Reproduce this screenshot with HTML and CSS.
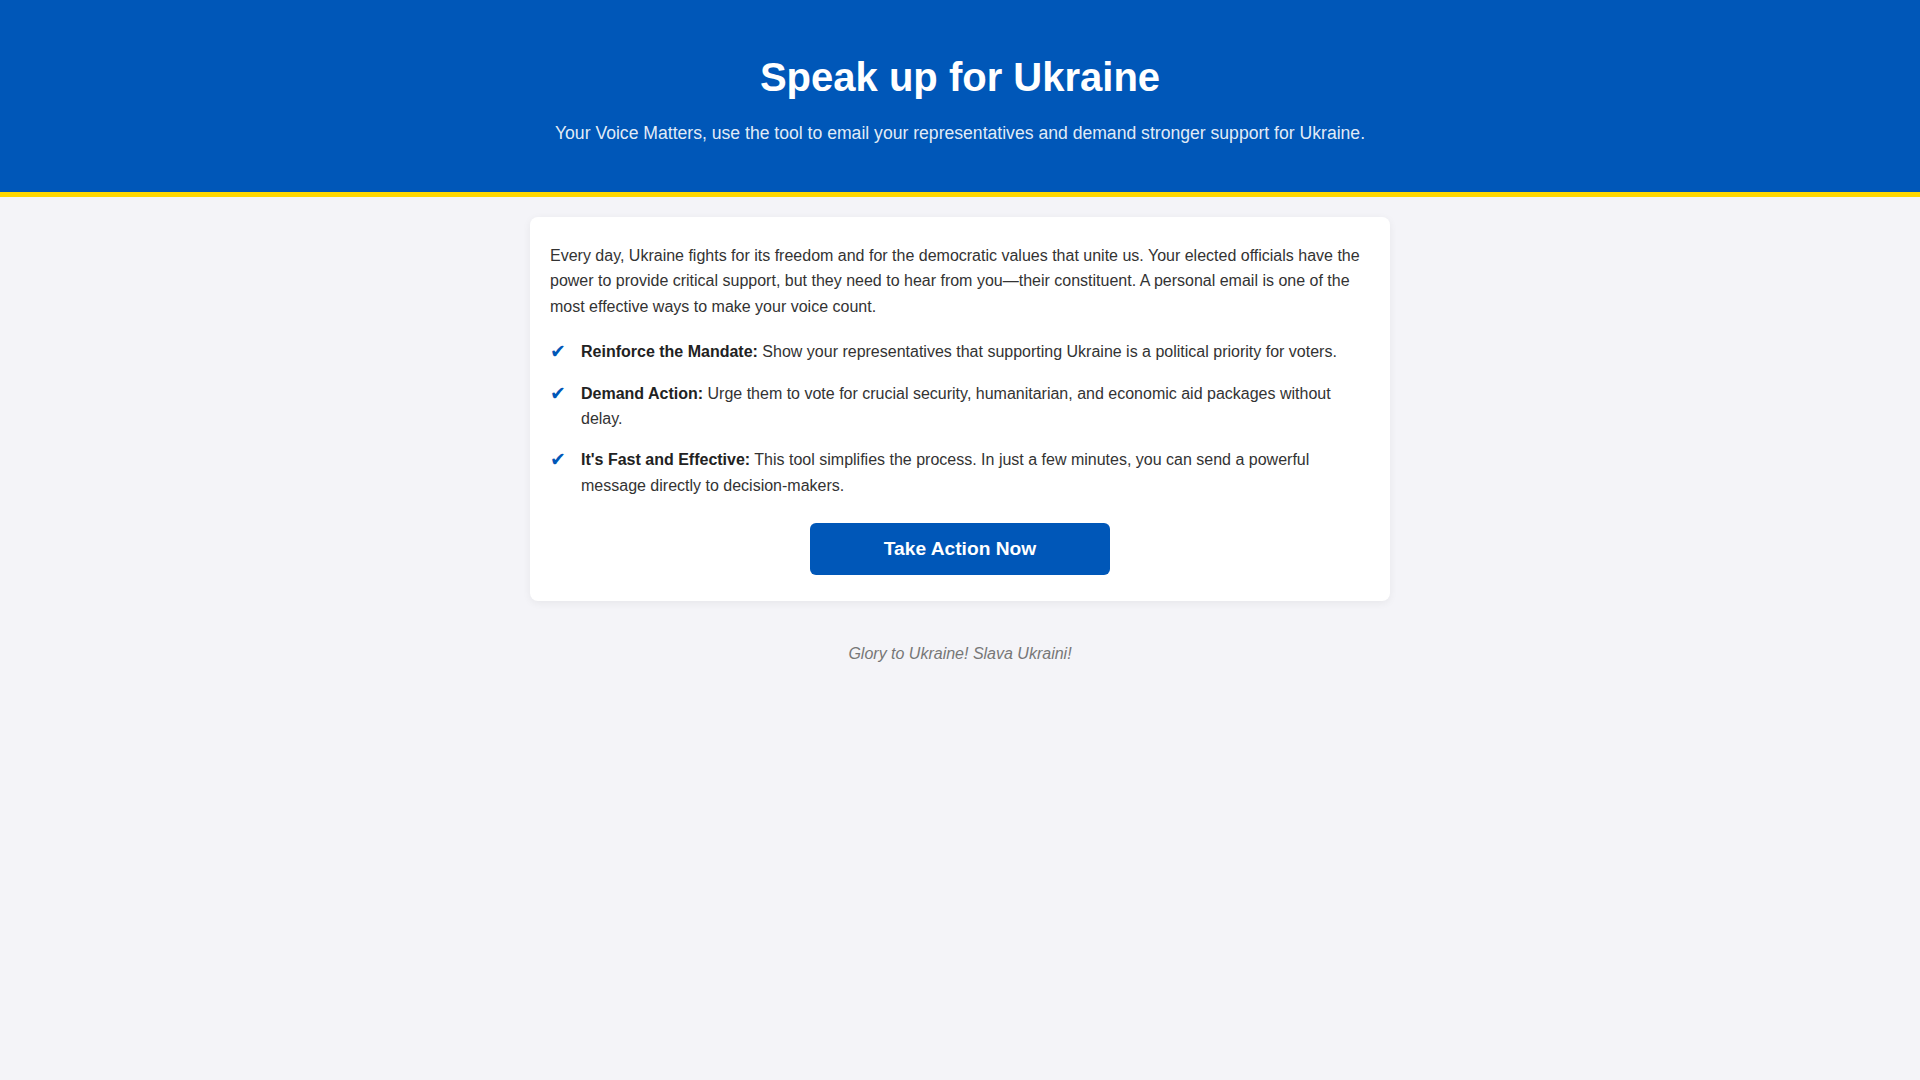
FILE: index.html
```html
<!DOCTYPE html>
<html lang="en">
<head>
<meta charset="utf-8">
<title>Speak up for Ukraine</title>
<link rel="stylesheet" href="styles.css">
</head>
<body>
<header class="hero">
  <h1 class="hero-title">Speak up for Ukraine</h1>
  <p class="hero-sub">Your Voice Matters, use the tool to email your representatives and demand stronger support for Ukraine.</p>
</header>
<main class="wrap">
  <section class="card">
    <p class="intro">Every day, Ukraine fights for its freedom and for the democratic values that unite us. Your elected officials have the power to provide critical support, but they need to hear from you—their constituent. A personal email is one of the most effective ways to make your voice count.</p>
    <ul class="points">
      <li class="point"><span class="check">✔</span><span class="point-text"><strong>Reinforce the Mandate:</strong> Show your representatives that supporting Ukraine is a political priority for voters.</span></li>
      <li class="point"><span class="check">✔</span><span class="point-text"><strong>Demand Action:</strong> Urge them to vote for crucial security, humanitarian, and economic aid packages without delay.</span></li>
      <li class="point"><span class="check">✔</span><span class="point-text"><strong>It's Fast and Effective:</strong> This tool simplifies the process. In just a few minutes, you can send a powerful message directly to decision-makers.</span></li>
    </ul>
    <div class="actions">
      <a class="btn" href="#">Take Action Now</a>
    </div>
  </section>
  <footer class="foot">Glory to Ukraine! Slava Ukraini!</footer>
</main>
</body>
</html>
```

FILE: styles.css
```css
html, body {
  margin: 0;
  padding: 0;
}
body {
  background: #f4f4f8;
  font-family: "Liberation Sans", Arial, sans-serif;
  font-size: 16px;
  line-height: 1.6;
  color: #333;
}
.hero {
  background: #0057b8;
  color: #fff;
  text-align: center;
  padding: 45px 20px 45px;
  border-bottom: 5px solid #ffd700;
}
.hero-title {
  margin: 0 0 10px;
  font-size: 40px;
  font-weight: bold;
  line-height: 1.6;
}
.hero-sub {
  margin: 0;
  font-size: 17.6px;
  color: rgba(255, 255, 255, 0.9);
}
.wrap {
  display: flex;
  flex-direction: column;
  align-items: center;
  padding: 20px 20px 40px;
}
.card {
  box-sizing: border-box;
  width: 860px;
  background: #fff;
  border-radius: 8px;
  box-shadow: 0 2px 8px rgba(0, 0, 0, 0.06);
  padding: 25.5px 20px 25.5px;
}
.intro {
  margin: 0 0 20px;
}
.points {
  list-style: none;
  margin: 0;
  padding: 0;
}
.point {
  display: grid;
  grid-template-columns: 31px 1fr;
  margin-bottom: 15.5px;
}
.point:last-child {
  margin-bottom: 0;
}
.check {
  color: #0057b8;
  font-family: "DejaVu Sans", sans-serif;
  font-weight: bold;
  font-size: 19px;
  line-height: 25.6px;
}
.point-text strong {
  color: #222;
}
.actions {
  display: flex;
  justify-content: center;
  margin-top: 24.5px;
}
.btn {
  display: inline-block;
  box-sizing: border-box;
  width: 300px;
  height: 52.5px;
  padding: 15px 0 0;
  background: #0057b8;
  color: #fff;
  text-align: center;
  text-decoration: none;
  font-size: 19.2px;
  font-weight: bold;
  line-height: normal;
  border-radius: 6px;
}
.foot {
  margin-top: 40px;
  color: #777;
  font-style: italic;
  text-align: center;
}
```
